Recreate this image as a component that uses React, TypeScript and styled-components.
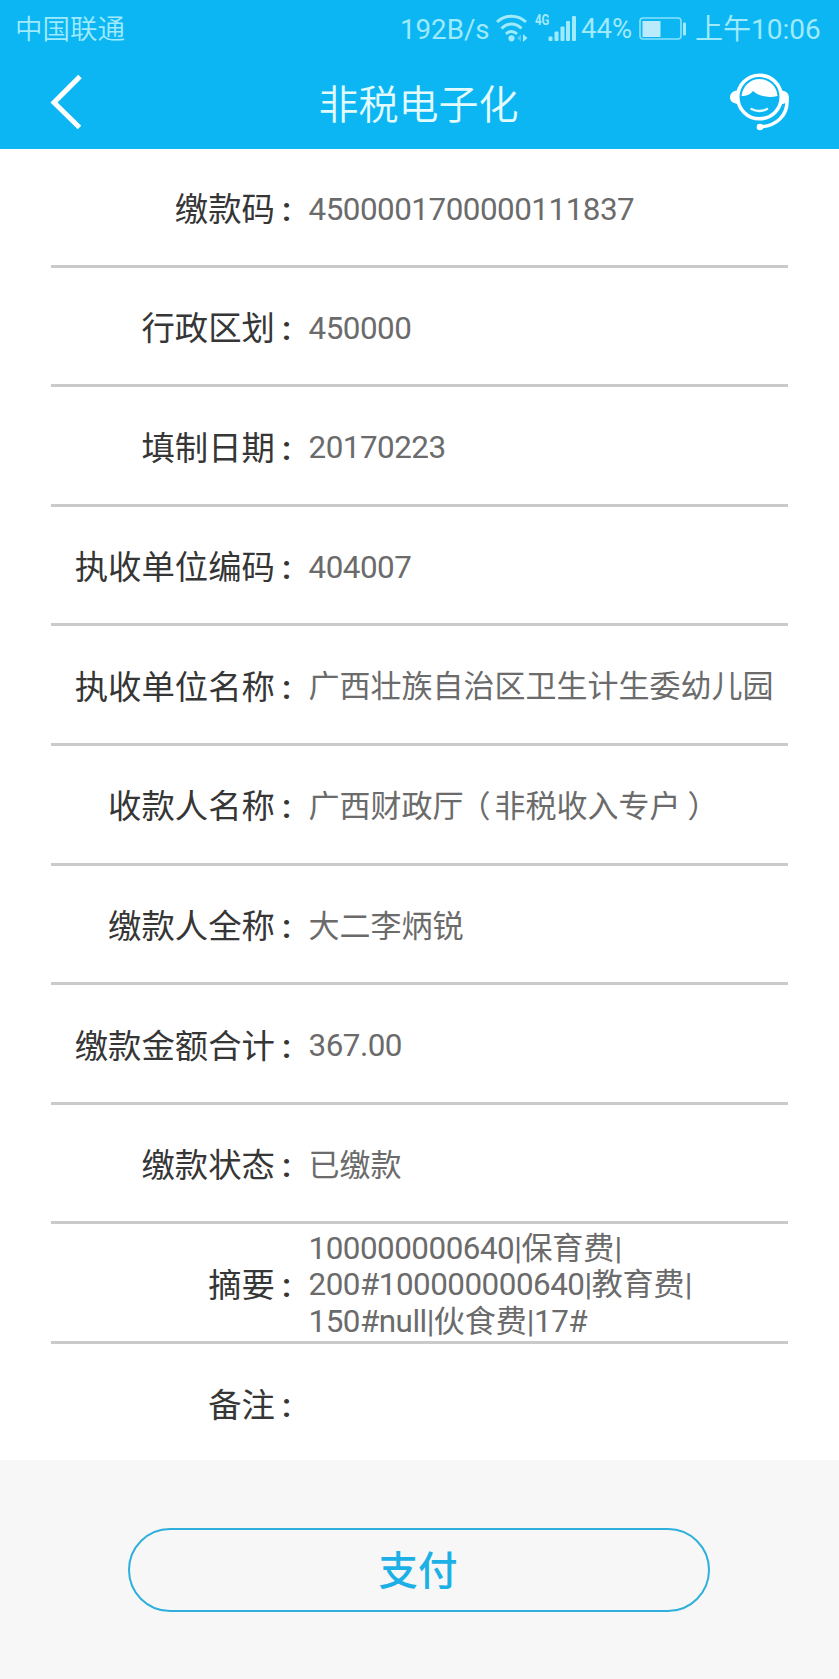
import React from "react";
import styled, { createGlobalStyle } from "styled-components";

const GlobalStyle = createGlobalStyle`
  * { box-sizing: border-box; }
  body {
    margin: 0;
    background: #f7f7f7;
    font-family: Roboto, "Noto Sans CJK SC", sans-serif;
  }
`;

const Page = styled.div`
  width: 839px;
  height: 1679px;
  display: flex;
  flex-direction: column;
  background: #f7f7f7;
  overflow: hidden;
`;

const Header = styled.header`
  height: 149px;
  background: #0bb6f3;
`;

const StatusBar = styled.div`
  height: 58px;
  display: flex;
  align-items: center;
  padding-left: 15px;
  color: #a0eafd;
  white-space: nowrap;
`;

const StatusText = styled.span<{ $width: number; $size: number; $weight?: number; $top?: number }>`
  flex: none;
  width: ${(p) => p.$width}px;
  padding-top: ${(p) => p.$top ?? 2}px;
  font-size: ${(p) => p.$size}px;
  font-weight: ${(p) => p.$weight ?? 350};
  line-height: 40px;
`;

const StatusIcon = styled.svg`
  display: block;
  flex: none;
`;

const NavBar = styled.nav`
  height: 91px;
  display: grid;
  grid-template-columns: 110px 1fr 110px;
  align-items: start;
`;

const NavButton = styled.button`
  height: 91px;
  padding: 0;
  border: 0;
  background: none;
  svg { display: block; }
`;

const Title = styled.h1`
  margin: 0;
  padding: 2px 2px 0 0;
  color: #e2fbff;
  font-size: 40px;
  font-weight: 350;
  line-height: 91px;
  text-align: center;
`;

const Details = styled.dl`
  margin: 0;
  padding: 0 51px;
  height: 1311px;
  background: #fff;
`;

const Row = styled.div`
  height: 119.6px;
  display: grid;
  grid-template-columns: 257.5px 1fr;
  align-items: center;
  padding-top: 5px;
  border-bottom: 3px solid #cacaca;
  &:first-child { height: 118.7px; }
  &:last-child { border-bottom: 0; height: 118px; }
`;

const Label = styled.dt`
  display: flex;
  justify-content: flex-end;
  padding-top: 1px;
  color: #363636;
  font-size: 33.4px;
  line-height: 40px;
  white-space: nowrap;
`;

const Colon = styled.span`
  width: 33.5px;
  padding-left: 7px;
  font-weight: 600;
`;

const Value = styled.dd`
  margin: 0;
  padding-top: 1px;
  color: #6b6b6b;
  font-size: 31px;
  line-height: 36.6px;
  white-space: pre;
`;

const Latin = styled.span`
  font-size: 31.4px;
  letter-spacing: -0.5px;
`;

const Paren = styled.span<{ $open: boolean }>`
  display: inline-block;
  width: 31px;
  line-height: 31px;
  font-feature-settings: "halt";
  text-indent: ${(p) => (p.$open ? 11.5 : 7)}px;
`;

const Footer = styled.footer`
  flex: 1;
  display: flex;
  justify-content: center;
  padding-top: 68px;
`;

const PayButton = styled.button`
  width: 582px;
  height: 84px;
  margin-right: 1px;
  padding: 3px 2px 0 0;
  border: 2.5px solid #2eafdc;
  border-radius: 42px;
  background: transparent;
  color: #1db0e6;
  font-family: inherit;
  font-size: 39.5px;
  font-weight: 500;
  line-height: 76px;
`;

const fields: { label: string; value: string }[] = [
  { label: "缴款码", value: "4500001700000111837" },
  { label: "行政区划", value: "450000" },
  { label: "填制日期", value: "20170223" },
  { label: "执收单位编码", value: "404007" },
  { label: "执收单位名称", value: "广西壮族自治区卫生计生委幼儿园" },
  { label: "收款人名称", value: "广西财政厅（非税收入专户）" },
  { label: "缴款人全称", value: "大二李炳锐" },
  { label: "缴款金额合计", value: "367.00" },
  { label: "缴款状态", value: "已缴款" },
  { label: "摘要", value: "100000000640|保育费|\n200#100000000640|教育费|\n150#null|伙食费|17#" },
  { label: "备注", value: "" },
];

const renderValue = (value: string) =>
  value.split(/([\x20-\x7e]+|[（）])/).map((part, i) => {
    if (i % 2 === 0) return part;
    if (part === "（" || part === "）") {
      return <Paren key={i} $open={part === "（"}>{part}</Paren>;
    }
    return <Latin key={i}>{part}</Latin>;
  });

const WifiIcon = () => (
  <StatusIcon width="32" height="30" viewBox="0 0 32 30" fill="none" stroke="#a0eafd" strokeWidth="3">
    <path d="M1 8C9.500 .4 21.500 .4 30 8M5.500 14.500C11.500 8.500 19.500 8.500 25.500 14.500M10 20C13.500 16.500 17.500 16.500 21 20" />
    <circle cx="15.500" cy="24.300" r="3.100" fill="#a0eafd" stroke="none" />
    <path d="M27 20v8l4.500-4z" fill="#a0eafd" stroke="none" />
    <path d="M25 20.500v7l-4-3.500z" fill="#54cdf7" stroke="none" />
  </StatusIcon>
);

const Signal = styled.div`
  position: relative;
  flex: none;
  width: 47px;
  height: 30px;
  margin-left: 6px;
`;

const Network = styled.span`
  position: absolute;
  left: 1px;
  top: 0;
  font-size: 15.5px;
  font-weight: 700;
  line-height: 13px;
  transform: scaleX(0.74);
  transform-origin: left;
`;

const SignalBars = () => (
  <StatusIcon width="46" height="30" viewBox="0 0 46 30" fill="#a0eafd">
    <rect x="14.500" y="22.500" width="4" height="4.500" rx="1" />
    <rect x="20.500" y="17.500" width="4" height="9.500" rx="1" />
    <rect x="26.500" y="12.500" width="4" height="14.500" rx="1" />
    <rect x="32" y="7" width="4" height="20" rx="1" />
    <rect x="38" y="2" width="4" height="25" rx="1" />
  </StatusIcon>
);

const BatteryIcon = () => (
  <StatusIcon width="56" height="24" viewBox="0 0 56 24" fill="none">
    <rect x="1" y="1" width="41" height="21" rx="3" stroke="#8be1fb" strokeWidth="1.600" />
    <rect x="3.500" y="4" width="18" height="16" fill="#baebfd" />
    <rect x="44" y="5.500" width="3" height="13" rx="1" fill="#a0eafd" />
  </StatusIcon>
);

const BackIcon = () => (
  <svg width="110" height="91" viewBox="0 58 110 91" fill="none" stroke="#fff" strokeWidth="5">
    <path d="M80 76.500L54 102.500L79.500 127.500" />
  </svg>
);

const SupportIcon = () => (
  <svg width="110" height="91" viewBox="729 58 110 91" fill="none">
    <circle cx="759.500" cy="97" r="21.800" stroke="#fff" strokeWidth="3.600" />
    <path d="M741.500 96C743 85 751 79 759.500 79S777 85 777.500 96C769 98 760 97 753 91C750 95 746 96 741.500 96Z" fill="#fff" />
    <path d="M737.500 90.500C732 91 730 94 730 97.500S733 103.500 738.500 104C737 99 736.500 95 737.500 90.500ZM781 90.500C787 91 789 94 789 98C788 102 785 104 780.500 104C782 99 782 95 781 90.500Z" fill="#fff" />
    <path d="M751.500 109Q759 113 767 109" stroke="#e5faff" strokeWidth="2.500" strokeLinecap="round" />
    <path d="M787 99C788 115 777 126 760 127" stroke="#fff" strokeWidth="3.500" />
    <circle cx="760" cy="127" r="3.300" fill="#fff" />
  </svg>
);

export default function App() {
  return (
    <Page>
      <GlobalStyle />
      <Header>
        <StatusBar>
          <StatusText $width={385} $size={27.5}>中国联通</StatusText>
          <StatusText $width={96} $size={27.7} $weight={400}>192B/s</StatusText>
          <WifiIcon />
          <Signal>
            <Network>4G</Network>
            <SignalBars />
          </Signal>
          <StatusText $width={58} $size={27.5} $weight={400} $top={0}>44%</StatusText>
          <BatteryIcon />
          <StatusText $width={144} $size={28} $weight={400}>上午10:06</StatusText>
        </StatusBar>
        <NavBar>
          <NavButton aria-label="返回"><BackIcon /></NavButton>
          <Title>非税电子化</Title>
          <NavButton aria-label="客服"><SupportIcon /></NavButton>
        </NavBar>
      </Header>
      <Details>
        {fields.map((f) => (
          <Row key={f.label}>
            <Label>{f.label}<Colon>:</Colon></Label>
            <Value>{renderValue(f.value)}</Value>
          </Row>
        ))}
      </Details>
      <Footer>
        <PayButton>支付</PayButton>
      </Footer>
    </Page>
  );
}
